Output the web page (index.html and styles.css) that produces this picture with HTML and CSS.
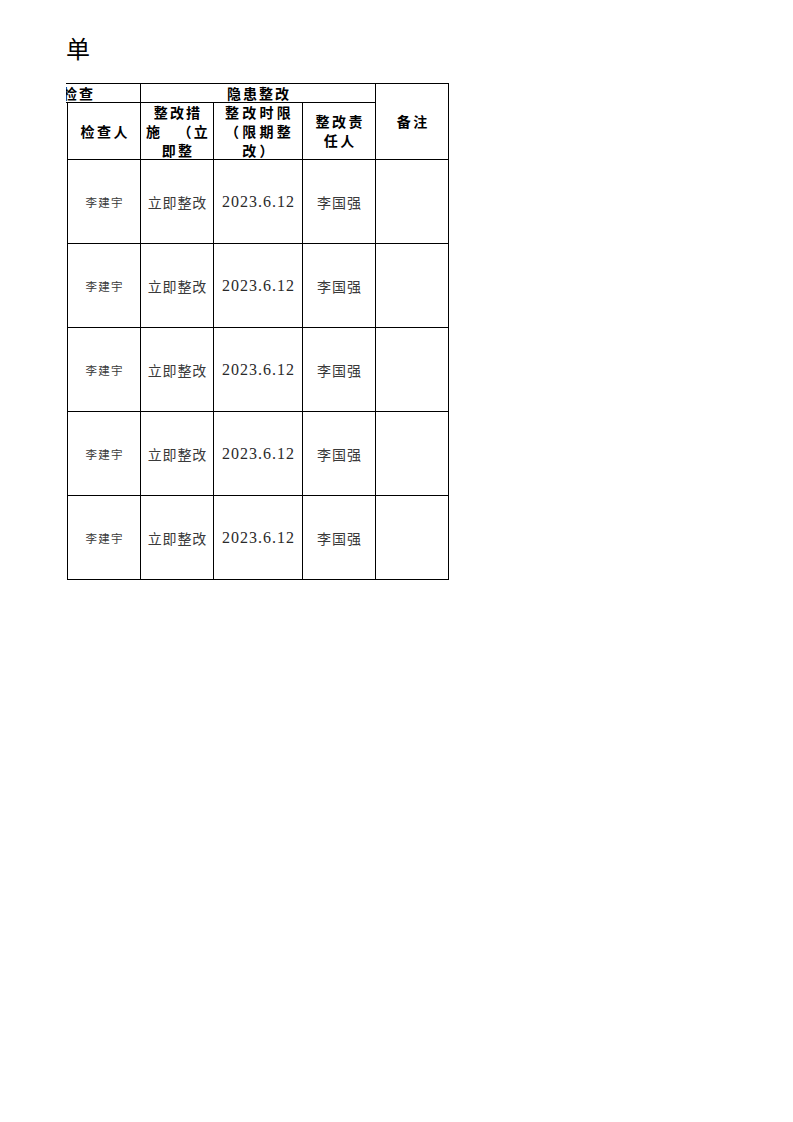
FILE: index.html
```html
<!DOCTYPE html>
<html lang="zh-CN">
<head>
<meta charset="utf-8">
<title>隐患整改登记单</title>
<link rel="stylesheet" href="styles.css">
</head>
<body>
<div class="page">
  <div class="title">单</div>
  <div class="sheet">
    <div class="grid">
      <div class="cell top-left"><span class="h1">检查</span></div>
      <div class="cell top-mid"><span class="h1 pad">隐患整改</span></div>
      <div class="cell remark"><span class="hd">备注</span></div>

      <div class="cell first head"><span class="hd">检查人</span></div>
      <div class="cell head-top">
        <div class="ln">整改措</div>
        <div class="ln split"><span>施</span><span>（立</span></div>
        <div class="ln">即整</div>
      </div>
      <div class="cell head-top wide">
        <div class="ln">整改时限</div>
        <div class="ln">（限期整</div>
        <div class="ln">改）</div>
      </div>
      <div class="cell head"><div class="stack"><span class="hd">整改责</span><span class="hd">任人</span></div></div>

      <div class="cell first"><span class="sm">李建宇</span></div>
      <div class="cell"><span class="md">立即整改</span></div>
      <div class="cell"><span class="num">2023.6.12</span></div>
      <div class="cell"><span class="md">李国强</span></div>
      <div class="cell"></div>

      <div class="cell first"><span class="sm">李建宇</span></div>
      <div class="cell"><span class="md">立即整改</span></div>
      <div class="cell"><span class="num">2023.6.12</span></div>
      <div class="cell"><span class="md">李国强</span></div>
      <div class="cell"></div>

      <div class="cell first"><span class="sm">李建宇</span></div>
      <div class="cell"><span class="md">立即整改</span></div>
      <div class="cell"><span class="num">2023.6.12</span></div>
      <div class="cell"><span class="md">李国强</span></div>
      <div class="cell"></div>

      <div class="cell first"><span class="sm">李建宇</span></div>
      <div class="cell"><span class="md">立即整改</span></div>
      <div class="cell"><span class="num">2023.6.12</span></div>
      <div class="cell"><span class="md">李国强</span></div>
      <div class="cell"></div>

      <div class="cell first"><span class="sm">李建宇</span></div>
      <div class="cell"><span class="md">立即整改</span></div>
      <div class="cell"><span class="num">2023.6.12</span></div>
      <div class="cell"><span class="md">李国强</span></div>
      <div class="cell"></div>
    </div>
  </div>
</div>
</body>
</html>
```

FILE: styles.css
```css
* { box-sizing: border-box; }
html, body {
  margin: 0;
  padding: 0;
  background: #fff;
}
body {
  font-family: "Noto Sans CJK SC", "Noto Sans", sans-serif;
  color: #000;
}
.page {
  padding-top: 35px;
}
.title {
  margin-left: 66px;
  font-size: 24px;
  line-height: 26px;
  height: 26px;
  color: #000;
}
.sheet {
  margin-top: 22px;
  margin-left: 66px;
  width: 383px;
  overflow: hidden;
}
.grid {
  display: grid;
  grid-template-columns: 75px 73px 89px 73px 73px;
  grid-template-rows: 19px 57px repeat(5, 84px);
  border-top: 1px solid #000;
}
.cell {
  border-right: 1px solid #000;
  border-bottom: 1px solid #000;
  display: flex;
  align-items: center;
  justify-content: center;
  overflow: hidden;
  min-width: 0;
}
.first {
  margin-left: 1px;
  border-left: 1px solid #000;
}
.top-left {
  align-items: flex-end;
  justify-content: flex-end;
  padding-right: 45px;
}
.top-left .h1 {
  white-space: nowrap;
  flex-shrink: 0;
}
.top-mid {
  grid-column: 2 / 5;
  align-items: flex-end;
}
.remark {
  grid-column: 5;
  grid-row: 1 / 3;
}
.h1 {
  font-size: 14px;
  font-weight: bold;
  line-height: 17px;
  letter-spacing: 2px;
  white-space: nowrap;
}
.pad { padding-left: 2px; }
.hd {
  font-size: 14px;
  font-weight: bold;
  line-height: 19px;
  letter-spacing: 2.5px;
  padding-left: 2.5px;
  white-space: nowrap;
}
.stack {
  display: flex;
  flex-direction: column;
  align-items: center;
}
.head-top {
  flex-direction: column;
  justify-content: flex-start;
  align-items: stretch;
}
.ln {
  font-size: 14px;
  font-weight: bold;
  line-height: 18px;
  height: 19px;
  flex-shrink: 0;
  letter-spacing: 2.2px;
  text-align: center;
  white-space: nowrap;
  padding-left: 2px;
}
.wide .ln {
  letter-spacing: 3.3px;
  padding-left: 3px;
}
.split {
  display: flex;
  justify-content: space-between;
  padding: 0 3px 0 5px;
}
.sm {
  font-size: 11.5px;
  letter-spacing: 1.3px;
  padding-left: 1.3px;
  color: #3a3a3a;
}
.md {
  font-size: 14px;
  letter-spacing: 0.9px;
  padding-left: 0.9px;
  color: #3a3a3a;
}
.num {
  font-family: "Liberation Serif", serif;
  font-size: 16px;
  letter-spacing: 1px;
  padding-left: 1px;
  color: #2a2a2a;
}
```
